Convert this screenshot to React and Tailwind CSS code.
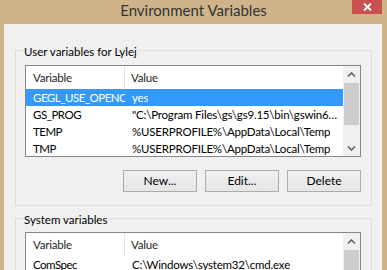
import React from "react";

const userVars = [
  ["GEGL_USE_OPENC", "yes"],
  ["GS_PROG", "\"C:\\Program Files\\gs\\gs9.15\\bin\\gswin6…"],
  ["TEMP", "%USERPROFILE%\\AppData\\Local\\Temp"],
  ["TMP", "%USERPROFILE%\\AppData\\Local\\Temp"],
];

const systemVars = [
  ["ComSpec", "C:\\Windows\\system32\\cmd.exe"],
  ["FP_NO_HOST_C", "NO"],
  ["NUMBER_OF_P", "4"],
];

function Chevron({ down }) {
  return (
    <svg width="9" height="6" viewBox="0 0 9 6">
      <path
        d={down ? "M1 1.5 L4.5 5 L8 1.5" : "M1 4.5 L4.5 1 L8 4.5"}
        fill="none"
        stroke="#606060"
        strokeWidth="1.6"
      />
    </svg>
  );
}

function VarList({ rows, selected, height, thumb }) {
  return (
    <div
      className="flex border border-[#828790] bg-white text-[11.5px] tracking-[-0.2px]"
      style={{ height }}
    >
      <div className="flex-1 overflow-hidden">
        {/* header */}
        <div className="flex h-[23px] items-center text-[#1e1e1e]">
          <div className="w-[99px] pl-[7px] border-r border-[#e5e5e5] h-full flex items-center">
            Variable
          </div>
          <div className="pl-[6px]">Value</div>
        </div>
        {rows.map(([name, value], i) => (
          <div
            key={name}
            className={
              "flex h-[17px] items-center whitespace-nowrap " +
              (i === selected ? "bg-[#3399ff] text-white" : "text-black")
            }
          >
            <div className="w-[99px] shrink-0 pl-[7px] overflow-hidden tracking-[-0.5px]">{name}</div>
            <div className="pl-[7px] overflow-hidden">{value}</div>
          </div>
        ))}
      </div>
      {/* scrollbar */}
      <div className="flex w-[17px] flex-col bg-[#f0f0f0]">
        <div className="flex h-[17px] items-center justify-center">
          <Chevron />
        </div>
        <div className="mx-[1px] bg-[#cdcdcd]" style={{ height: thumb }} />
        <div className="flex-1" />
        <div className="flex h-[17px] items-center justify-center">
          <Chevron down />
        </div>
      </div>
    </div>
  );
}

function Btn({ children }) {
  return (
    <button className="h-[22px] w-[74px] border border-[#acacac] bg-gradient-to-b from-[#f0f0f0] to-[#e5e5e5] text-[12px] text-black">
      {children}
    </button>
  );
}

export default function App() {
  return (
    <div className="h-[270px] w-[387px] overflow-hidden bg-[#cfb38b] font-['Lato','Noto_Sans',sans-serif] text-[12px]">
      {/* title bar */}
      <div className="relative flex h-[24px] items-start justify-center">
        <span className="mt-[1px] text-[15px] leading-[18px] text-[#333333]">
          Environment Variables
        </span>
        <div className="absolute right-[5px] top-0 flex h-[14px] w-[30px] items-center justify-center bg-[#c75050]">
          <svg width="9" height="8" viewBox="0 0 9 8">
            <path d="M1 0.5 L8 7.5 M8 0.5 L1 7.5" stroke="white" strokeWidth="1.8" />
          </svg>
        </div>
      </div>

      {/* client area */}
      <div className="ml-[4px] mr-[5px] h-[260px] bg-[#f0f0f0] pl-[11px] pr-[10px] pt-[26px]">
        <div className="border border-[#dcdcdc] pl-[9px] pr-[10px] pb-[13px]">
          <div className="-mt-[7px] ml-[-2px] w-fit bg-[#f0f0f0] px-[1px] text-[11.5px] leading-[16px] text-black">
            User variables for Lylej
          </div>
          <div className="mt-[5px]">
            <VarList rows={userVars} selected={0} height={92} thumb={42} />
          </div>
          <div className="mt-[13px] flex justify-end gap-[8px]">
            <Btn>New...</Btn>
            <Btn>Edit...</Btn>
            <Btn>Delete</Btn>
          </div>
        </div>

        <div className="mt-[12px] border border-[#dcdcdc] pl-[9px] pr-[10px] pb-[13px]">
          <div className="-mt-[7px] ml-[-2px] w-fit bg-[#f0f0f0] px-[1px] text-[11.5px] leading-[16px] text-black">
            System variables
          </div>
          <div className="mt-[4px]">
            <VarList rows={systemVars} selected={-1} height={92} thumb={30} />
          </div>
        </div>
      </div>
    </div>
  );
}
